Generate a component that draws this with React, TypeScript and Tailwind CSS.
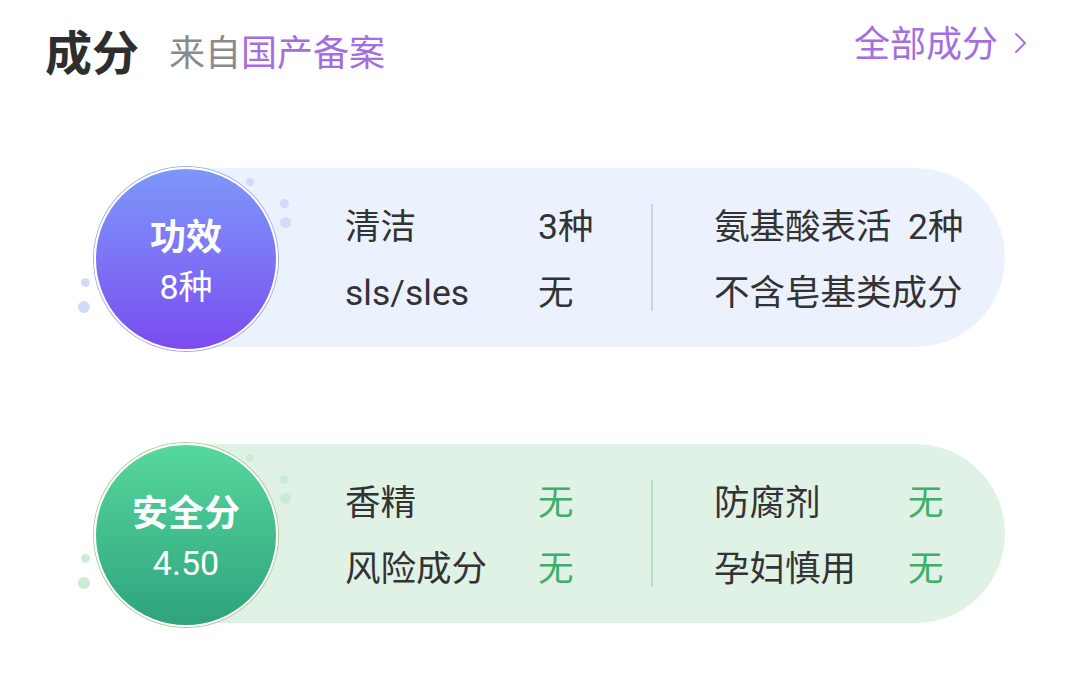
import React from "react";

type Item = { label: string; value: string; green?: boolean };

const FONT = { fontFamily: 'Roboto, "Noto Sans CJK SC", sans-serif' };

function Dots({ color }: { color: string }) {
  const dots = [
    { x: 156, y: 15, r: 4 },
    { x: 190, y: 36, r: 4.5 },
    { x: 191, y: 55, r: 5.5 },
    { x: -9, y: 115, r: 4.5 },
    { x: -10, y: 140, r: 6 },
  ];
  return (
    <>
      {dots.map((d, i) => (
        <span
          key={i}
          className="absolute rounded-full"
          style={{ left: d.x - d.r, top: d.y - d.r, width: d.r * 2, height: d.r * 2, background: color }}
        />
      ))}
    </>
  );
}

function Column({ items, labelW, valueCls }: { items: Item[]; labelW: string; valueCls: (it: Item) => string }) {
  return (
    <div className="flex flex-col pt-[7px]">
      {items.map((it) => (
        <div key={it.label} className="flex h-[66px] items-center text-[35.5px] text-[#333333] whitespace-nowrap">
          <span className={labelW}>{it.label}</span>
          <span className={valueCls(it)}>{it.value}</span>
        </div>
      ))}
    </div>
  );
}

function Row({
  green,
  title,
  sub,
  left,
  right,
}: {
  green?: boolean;
  title: string;
  sub: string;
  left: Item[];
  right: Item[];
}) {
  const cardBg = green ? "bg-[#e0f1e5]" : "bg-[#ecf2fd]";
  const divider = green ? "bg-[#b9dfc6]" : "bg-[#c8d6ea]";
  const circle = green
    ? "bg-linear-to-b from-[#56d89c] to-[#2ea37d] shadow-[0_0_0_1px_#a9cc92]"
    : "bg-linear-to-b from-[#7c97fa] to-[#7a4af0] shadow-[0_0_0_1px_#a2a8e6]";
  const valueCls = (it: Item) => (it.green ? "text-[#3eae68]" : "text-[#333333]");
  return (
    <div className="flex items-start ml-[94px]">
      <div className="relative z-10 shrink-0">
        <Dots color={green ? "#c9ecd6" : "#d3dcf6"} />
        <div
          className={`relative w-[184px] h-[184px] rounded-full border-2 border-white flex flex-col items-center justify-center pt-[5px] text-white ${circle}`}
        >
          <div className="text-[36px] font-bold leading-[48px]">{title}</div>
          <div className="text-[34px] leading-[46px] mt-[2px]">{sub}</div>
        </div>
      </div>
      <div className={`-ml-[92px] mt-[1px] w-[819px] h-[179px] rounded-r-full ${cardBg} flex items-center pl-[159px]`}>
        <div className="w-[306px] shrink-0">
          <Column items={left} labelW="w-[193px]" valueCls={valueCls} />
        </div>
        <div className={`w-[2px] h-[107px] shrink-0 ${divider}`} />
        <div className="ml-[61px]">
          <Column items={right} labelW="w-[194px]" valueCls={valueCls} />
        </div>
      </div>
    </div>
  );
}

export default function App() {
  return (
    <div className="w-[1080px] h-[694px] bg-white overflow-hidden" style={FONT}>
      <div className="flex items-start justify-between pl-[45px] pr-[52px] pt-[26px]">
        <div className="flex items-center">
          <span className="text-[47px] font-bold leading-[56px] text-[#2e2e2e]">成分</span>
          <span className="ml-[30px] text-[36px] leading-[56px] text-[#8a8a8a]">
            来自<span className="text-[#a56ee0]">国产备案</span>
          </span>
        </div>
        <div className="flex items-center text-[36px] leading-[40px] text-[#a56ee0] mt-[-1px]">
          <span>全部成分</span>
          <svg width="14" height="22" viewBox="0 0 14 22" className="ml-[16px] mt-[-4px]">
            <path d="M2 2 L11 11 L2 20" fill="none" stroke="#a56ee0" strokeWidth="1.8" strokeLinecap="round" strokeLinejoin="round" />
          </svg>
        </div>
      </div>
      <div className="flex flex-col gap-[92px] mt-[85px]">
        <Row
          title="功效"
          sub="8种"
          left={[
            { label: "清洁", value: "3种" },
            { label: "sls/sles", value: "无" },
          ]}
          right={[
            { label: "氨基酸表活", value: "2种" },
            { label: "不含皂基类成分", value: "" },
          ]}
        />
        <Row
          green
          title="安全分"
          sub="4.50"
          left={[
            { label: "香精", value: "无", green: true },
            { label: "风险成分", value: "无", green: true },
          ]}
          right={[
            { label: "防腐剂", value: "无", green: true },
            { label: "孕妇慎用", value: "无", green: true },
          ]}
        />
      </div>
    </div>
  );
}
